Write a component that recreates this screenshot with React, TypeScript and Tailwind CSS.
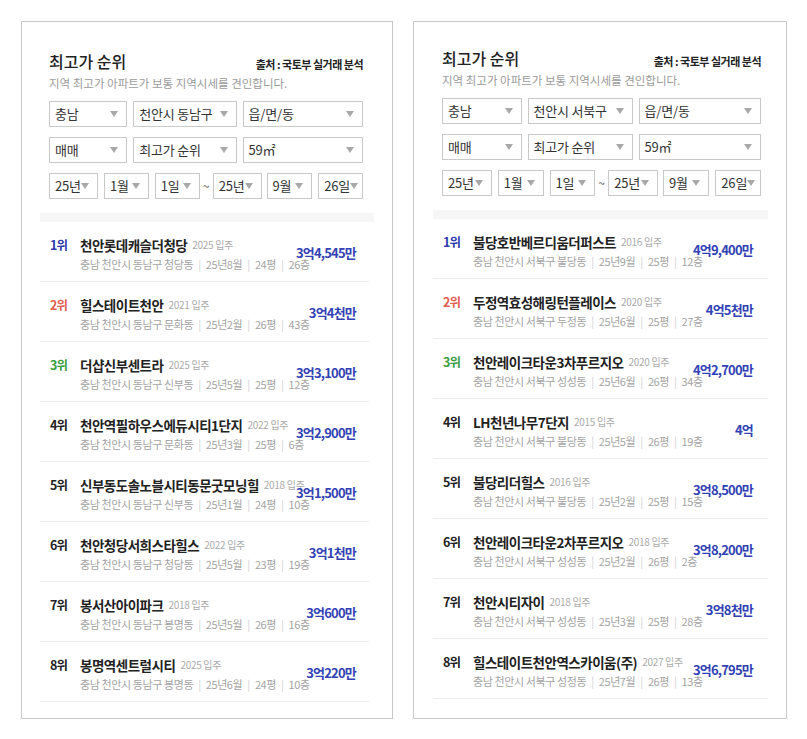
import React from "react";

type Item = {
  name: string;
  year: string;
  dong: string;
  date: string;
  size: string;
  floor: string;
  price: string;
};

type PanelProps = {
  gu: string;
  items: Item[];
  panelClass: string;
  headClass: string;
  listClass: string;
  rowClass: string;
};

const rankColor = ["text-[#2f3cae]", "text-[#e2604f]", "text-[#3b9e3f]"];

const left: Item[] = [
  { name: "천안롯데캐슬더청당", year: "2025", dong: "청당동", date: "25년8월", size: "24평", floor: "26층", price: "3억4,545만" },
  { name: "힐스테이트천안", year: "2021", dong: "문화동", date: "25년2월", size: "26평", floor: "43층", price: "3억4천만" },
  { name: "더샵신부센트라", year: "2025", dong: "신부동", date: "25년5월", size: "25평", floor: "12층", price: "3억3,100만" },
  { name: "천안역필하우스에듀시티1단지", year: "2022", dong: "문화동", date: "25년3월", size: "25평", floor: "6층", price: "3억2,900만" },
  { name: "신부동도솔노블시티동문굿모닝힐", year: "2018", dong: "신부동", date: "25년1월", size: "24평", floor: "10층", price: "3억1,500만" },
  { name: "천안청당서희스타힐스", year: "2022", dong: "청당동", date: "25년5월", size: "23평", floor: "19층", price: "3억1천만" },
  { name: "봉서산아이파크", year: "2018", dong: "봉명동", date: "25년5월", size: "26평", floor: "16층", price: "3억600만" },
  { name: "봉명역센트럴시티", year: "2025", dong: "봉명동", date: "25년6월", size: "24평", floor: "10층", price: "3억220만" },
];

const right: Item[] = [
  { name: "불당호반베르디움더퍼스트", year: "2016", dong: "불당동", date: "25년9월", size: "25평", floor: "12층", price: "4억9,400만" },
  { name: "두정역효성해링턴플레이스", year: "2020", dong: "두정동", date: "25년6월", size: "25평", floor: "27층", price: "4억5천만" },
  { name: "천안레이크타운3차푸르지오", year: "2020", dong: "성성동", date: "25년6월", size: "26평", floor: "34층", price: "4억2,700만" },
  { name: "LH천년나무7단지", year: "2015", dong: "불당동", date: "25년5월", size: "26평", floor: "19층", price: "4억" },
  { name: "불당리더힐스", year: "2016", dong: "불당동", date: "25년2월", size: "25평", floor: "15층", price: "3억8,500만" },
  { name: "천안레이크타운2차푸르지오", year: "2018", dong: "성성동", date: "25년2월", size: "26평", floor: "2층", price: "3억8,200만" },
  { name: "천안시티자이", year: "2018", dong: "성성동", date: "25년3월", size: "25평", floor: "28층", price: "3억8천만" },
  { name: "힐스테이트천안역스카이움(주)", year: "2027", dong: "성정동", date: "25년7월", size: "26평", floor: "13층", price: "3억6,795만" },
];

function Caret() {
  return (
    <span className="ml-auto shrink-0 w-0 h-0 border-l-[4px] border-r-[4px] border-t-[6px] border-l-transparent border-r-transparent border-t-[#a8a8a8]" />
  );
}

function Select({ label, className = "" }: { label: string; className?: string }) {
  return (
    <div
      className={`flex h-[26px] min-w-0 items-center overflow-hidden border border-[#c9c9c9] bg-white pl-[5px] pr-[8px] text-[13px] tracking-[-0.2px] text-[#333] ${className}`}
    >
      <span className="whitespace-nowrap">{label}</span>
      <Caret />
    </div>
  );
}

function Bar() {
  return <span className="mx-[5px] text-[#d0d0d0]">|</span>;
}

function Row({ item, rank, gu, rowClass }: { item: Item; rank: number; gu: string; rowClass: string }) {
  const color = rankColor[rank - 1] ?? "text-[#222]";
  return (
    <div className={`flex h-[60px] items-center border-b border-[#ececec] pl-[10px] ${rowClass}`}>
      <div className="min-w-0 flex-1 whitespace-nowrap pt-[4px]">
        <div className="flex items-center leading-[20px]">
          <span className={`w-[30px] shrink-0 text-[12.5px] font-bold tracking-[-1px] ${color}`}>{rank}위</span>
          <span className="text-[13.5px] font-bold tracking-[-0.5px] text-[#222]">{item.name}</span>
          <span className="ml-[5px] text-[10px] tracking-[-0.3px] text-[#aaa]">{item.year} 입주</span>
        </div>
        <div className="pl-[30px] text-[11px] leading-[18px] tracking-[-0.4px] text-[#a3a3a3]">
          충남 천안시 {gu.replace("천안시 ", "")} {item.dong}
          <Bar />
          {item.date}
          <Bar />
          {item.size}
          <Bar />
          {item.floor}
        </div>
      </div>
      <span className="mt-[2px] shrink-0 text-[13px] font-bold tracking-[-0.8px] text-[#3242b5]">{item.price}</span>
    </div>
  );
}

function Panel({ gu, items, panelClass, headClass, listClass, rowClass }: PanelProps) {
  return (
    <div className={`h-[698px] shrink-0 border border-[#c8c8c8] bg-white ${panelClass}`}>
      <div className={headClass}>
        <div className="flex items-end justify-between">
          <h2 className="text-[16px] font-medium leading-[22px] text-[#222]">최고가 순위</h2>
          <span className="text-[11px] font-bold leading-[16px] tracking-[-0.5px] text-[#222]">출처 : 국토부 실거래 분석</span>
        </div>
        <p className="mt-[3px] text-[11.5px] leading-[16px] text-[#9a9a9a]">
          지역 최고가 아파트가 보통 지역시세를 견인합니다.
        </p>

        <div className="mt-[10px] grid grid-cols-[78fr_103fr_120fr] gap-x-[6px] gap-y-[10px]">
          <Select label="충남" />
          <Select label={gu} />
          <Select label="읍/면/동" />
          <Select label="매매" />
          <Select label="최고가 순위" />
          <Select label="59㎡" />
        </div>

        <div className="mt-[10px] flex items-center">
          <Select label="25년" className="flex-[50_1_0%]" />
          <Select label="1월" className="ml-[6px] flex-[44_1_0%]" />
          <Select label="1일" className="ml-[6px] flex-[44_1_0%]" />
          <span className="w-[13px] shrink-0 text-center text-[12px] text-[#555]">~</span>
          <Select label="25년" className="flex-[50_1_0%]" />
          <Select label="9월" className="ml-[5px] flex-[45_1_0%]" />
          <Select label="26일" className="ml-[6px] flex-[44_1_0%]" />
        </div>
      </div>

      <div className={listClass}>
        <div className="mt-[14px] h-[9px] bg-[#f7f7f7]" />
        {items.map((item, i) => (
          <Row key={item.name} item={item} rank={i + 1} gu={gu} rowClass={rowClass} />
        ))}
      </div>
    </div>
  );
}

export default function App() {
  return (
    <div className="flex h-[739px] w-[807px] items-start gap-[20px] bg-white pl-[21px] pt-[21px] font-['Noto_Sans_CJK_KR',sans-serif]">
      <Panel
        gu="천안시 동남구"
        items={left}
        panelClass="w-[372px]"
        headClass="pl-[27px] pr-[29px] pt-[28px]"
        listClass="ml-[18px] mr-[18px]"
        rowClass="mr-[5px] pr-[13px]"
      />
      <Panel
        gu="천안시 서북구"
        items={right}
        panelClass="w-[374px]"
        headClass="pl-[28px] pr-[25px] pt-[25px]"
        listClass="ml-[19px] mr-[18px]"
        rowClass="pr-[15px]"
      />
    </div>
  );
}
